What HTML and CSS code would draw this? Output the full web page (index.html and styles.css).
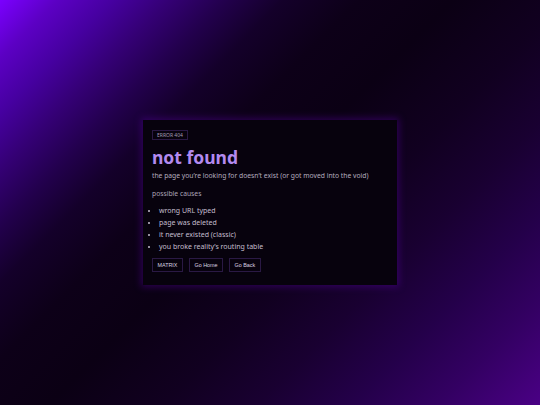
FILE: index.html
```html
<!DOCTYPE html>
<html lang="en">
<head>
<meta charset="utf-8">
<title>404</title>
<link rel="stylesheet" href="styles.css">
</head>
<body>
<main class="card">
  <div class="badge">ERROR 404</div>
  <h1 class="title">not found</h1>
  <p class="sub">the page you’re looking for doesn’t exist (or got moved into the void)</p>
  <p class="label">possible causes</p>
  <ul class="causes">
    <li>wrong URL typed</li>
    <li>page was deleted</li>
    <li>it never existed (classic)</li>
    <li>you broke reality’s routing table</li>
  </ul>
  <div class="actions">
    <button class="btn">MATRIX</button>
    <button class="btn">Go Home</button>
    <button class="btn">Go Back</button>
  </div>
</main>
</body>
</html>
```
FILE: styles.css
```css
html, body {
  margin: 0;
  height: 100%;
}
body {
  font-family: "Noto Sans", "DejaVu Sans", sans-serif;
  background: linear-gradient(135deg,
    #7b00ff 0%, #5c00c4 6%, #4600a0 12%, #340074 18%, #22004c 24%,
    #14002a 30%, #0d0018 38%, #0b0014 48%, #110020 60%,
    #190031 70%, #24004a 80%, #330062 89%, #4a0085 100%);
  display: flex;
  align-items: center;
  justify-content: center;
}
.card {
  box-sizing: border-box;
  width: 254px;
  height: 165px;
  padding: 10px 9px;
  background: #07020d;
  box-shadow: 0 0 7px 2px rgba(90, 0, 170, 0.4);
  color: #bdb6c6;
}
.badge {
  display: block;
  width: fit-content;
  box-sizing: border-box;
  height: 10px;
  padding: 0 4px;
  border: 1px solid #2a1944;
  font-size: 5px;
  line-height: 8px;
  color: #a69db3;
}
.title {
  margin: 7px 0 0;
  font-size: 17.5px;
  line-height: 20px;
  font-weight: 700;
  color: #b38af0;
}
.sub {
  margin: 4px 0 0;
  font-size: 6.75px;
  line-height: 10px;
  color: #b4adbf;
}
.label {
  margin: 8px 0 0;
  font-size: 6.75px;
  line-height: 10px;
  color: #aaa2b5;
}
.causes {
  margin: 6px 0 0;
  padding-left: 7px;
  font-size: 7px;
  line-height: 12px;
  color: #c4bece;
}
.actions {
  display: flex;
  gap: 6px;
  margin-top: 5px;
}
.btn {
  box-sizing: border-box;
  height: 14px;
  padding: 0 4.5px;
  background: #07020d;
  border: 1px solid #2a1944;
  font-family: "Liberation Sans", Arial, sans-serif;
  font-size: 5.4px;
  color: #d8d2e0;
}
```
